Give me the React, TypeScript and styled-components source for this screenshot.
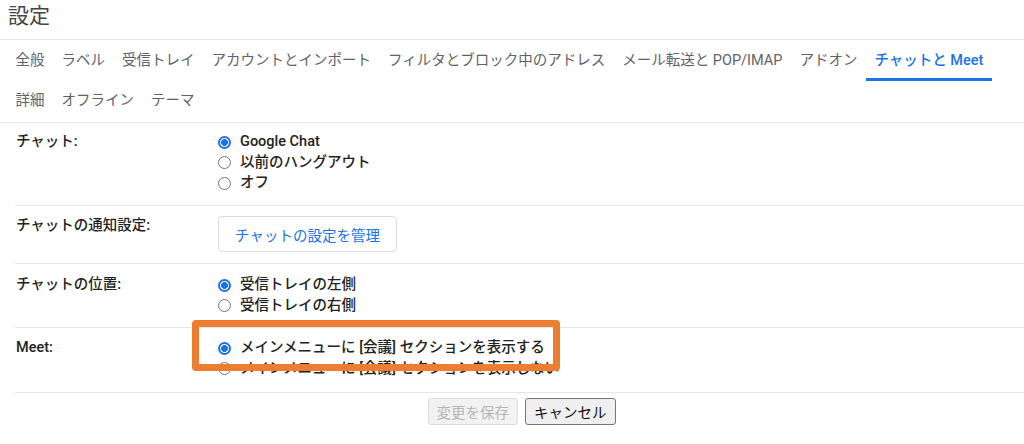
import styled, { createGlobalStyle } from "styled-components";

const GlobalStyle = createGlobalStyle`
  body {
    margin: 0;
    background: #ffffff;
    font-family: Roboto, "Noto Sans CJK JP", "Noto Sans", sans-serif;
    color: #222;
  }
`;

const Page = styled.div`
  width: 1024px;
  height: 444px;
  overflow: hidden;
  background: #fff;
`;

const Title = styled.h1`
  margin: 0;
  height: 39px;
  padding-left: 8px;
  font-size: 21px;
  line-height: 32px;
  font-weight: 400;
  color: #444;
  border-bottom: 1px solid #e8e8e8;
`;

const TabBar = styled.nav`
  padding: 1px 0 1px 7px;
  border-bottom: 1px solid #e8e8e8;
`;

const TabRow = styled.div`
  display: flex;
`;

const Tab = styled.div<{ $active?: boolean }>`
  padding: 10px 8.5px 7px;
  font-size: 14.5px;
  line-height: 20px;
  white-space: nowrap;
  color: ${(p) => (p.$active ? "#1a73e8" : "#5f6368")};
  font-weight: ${(p) => (p.$active ? 500 : 400)};
  border-bottom: 3px solid ${(p) => (p.$active ? "#1a73e8" : "transparent")};
`;

const Row = styled.section<{ $pt: number; $pb: number }>`
  position: relative;
  margin-left: 15px;
  display: grid;
  grid-template-columns: 203px 1fr;
  padding: ${(p) => p.$pt}px 0 ${(p) => p.$pb}px;
  border-bottom: 1px solid #e6e6e6;
`;

const Label = styled.div`
  padding-left: 1px;
  font-size: 14.5px;
  line-height: 20.5px;
  font-weight: 500;
  color: #222;
`;

const Options = styled.div`
  display: flex;
  flex-direction: column;
`;

const Option = styled.label`
  display: flex;
  align-items: center;
  font-size: 14.5px;
  line-height: 20.5px;
  font-weight: 500;
  color: #222;
  white-space: nowrap;
`;

const Radio = styled.span<{ $checked?: boolean }>`
  box-sizing: border-box;
  width: 13px;
  height: 13px;
  margin-right: 9px;
  border-radius: 50%;
  border: ${(p) => (p.$checked ? "2px solid #1a73e8" : "1px solid #767676")};
  background: ${(p) =>
    p.$checked ? "radial-gradient(circle, #1a73e8 0 3.2px, #fff 3.6px)" : "#fff"};
  flex-shrink: 0;
`;

const ManageButton = styled.button`
  box-sizing: border-box;
  width: 179px;
  height: 36px;
  padding: 0;
  background: #fff;
  border: 1px solid #dadce0;
  border-radius: 4px;
  font-family: inherit;
  font-size: 14.5px;
  color: #1a73e8;
  cursor: pointer;
`;

const Highlight = styled.div`
  position: absolute;
  left: 177px;
  top: -8px;
  width: 368px;
  height: 51px;
  box-sizing: border-box;
  border: 7px solid #ed7d31;
  border-radius: 4px;
  z-index: 1;
  pointer-events: none;
`;

const Actions = styled.div`
  display: flex;
  justify-content: center;
  gap: 7px;
  padding: 5px 0 0 19px;
`;

const FormButton = styled.button<{ $disabled?: boolean }>`
  box-sizing: border-box;
  height: 27px;
  padding: 0 8px;
  font-family: "Noto Sans CJK JP", sans-serif;
  font-size: 14.5px;
  line-height: 20px;
  border-radius: 3px;
  background: ${(p) => (p.$disabled ? "#f2f2f2" : "#efefef")};
  border: 1px solid ${(p) => (p.$disabled ? "#dcdcdc" : "#767676")};
  color: ${(p) => (p.$disabled ? "#b5b5b5" : "#111")};
`;

const tabsTop = [
  "全般",
  "ラベル",
  "受信トレイ",
  "アカウントとインポート",
  "フィルタとブロック中のアドレス",
  "メール転送と POP/IMAP",
  "アドオン",
  "チャットと Meet",
];
const tabsBottom = ["詳細", "オフライン", "テーマ"];

function RadioOption({ checked, children }: { checked?: boolean; children: React.ReactNode }) {
  return (
    <Option>
      <Radio $checked={checked} />
      {children}
    </Option>
  );
}

export default function App() {
  return (
    <Page>
      <GlobalStyle />
      <Title>設定</Title>
      <TabBar>
        <TabRow>
          {tabsTop.map((t) => (
            <Tab key={t} $active={t === "チャットと Meet"}>
              {t}
            </Tab>
          ))}
        </TabRow>
        <TabRow>
          {tabsBottom.map((t) => (
            <Tab key={t}>{t}</Tab>
          ))}
        </TabRow>
      </TabBar>

      <Row $pt={9} $pb={11.5}>
        <Label>チャット:</Label>
        <Options>
          <RadioOption checked>Google Chat</RadioOption>
          <RadioOption>以前のハングアウト</RadioOption>
          <RadioOption>オフ</RadioOption>
        </Options>
      </Row>

      <Row $pt={10} $pb={11}>
        <Label>チャットの通知設定:</Label>
        <div>
          <ManageButton>チャットの設定を管理</ManageButton>
        </div>
      </Row>

      <Row $pt={11} $pb={11}>
        <Label>チャットの位置:</Label>
        <Options>
          <RadioOption checked>受信トレイの左側</RadioOption>
          <RadioOption>受信トレイの右側</RadioOption>
        </Options>
      </Row>

      <Row $pt={10} $pb={13}>
        <Label>Meet:</Label>
        <Options>
          <RadioOption checked>メインメニューに [会議] セクションを表示する</RadioOption>
          <RadioOption>メインメニューに [会議] セクションを表示しない</RadioOption>
        </Options>
        <Highlight />
      </Row>

      <Actions>
        <FormButton $disabled>変更を保存</FormButton>
        <FormButton>キャンセル</FormButton>
      </Actions>
    </Page>
  );
}
